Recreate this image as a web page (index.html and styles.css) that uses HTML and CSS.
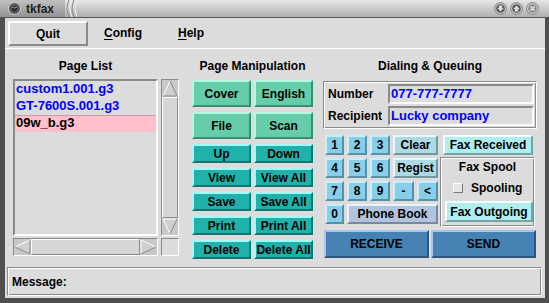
FILE: index.html
```html
<!DOCTYPE html>
<html>
    <head>
        <title>tkfax</title>
        <meta name="viewport" content="width=device-width, initial-scale=1">
        <link rel="stylesheet" href="styles.css">
    </head>
    <body>
<div class="window">
    <div class="titlebar">
        <div class="title-left">
            <svg class="title-icon" width="13" height="13" viewBox="0 0 13 13">
                <circle cx="6.5" cy="6.5" r="6" fill="#5a5a5a" stroke="#d0d0d0" stroke-width="1"/>
                <path d="M3.2 5 Q6.5 3.2 9.8 5 Q9.4 9.5 6.5 9.8 Q3.6 9.5 3.2 5 Z" fill="#2e2e2e"/>
                <path d="M3.6 5.2 Q6.5 6.6 9.4 5.2" stroke="#9a9a9a" fill="none"/>
            </svg>
            <span class="title">tkfax</span>
        </div>
        <svg class="grooves" width="12" height="17" viewBox="0 0 12 17">
            <path d="M4 0 Q0 8.5 4 17" stroke="#8a8a8a" fill="none"/>
            <path d="M7 0 Q3 8.5 7 17" stroke="#f4f4f4" fill="none"/>
            <path d="M9 0 Q5 8.5 9 17" stroke="#8a8a8a" fill="none"/>
            <path d="M12 0 Q8 8.5 12 17" stroke="#f4f4f4" fill="none"/>
        </svg>
        <div class="title-fill"></div>
        <div class="title-buttons">
            <svg width="13" height="13" viewBox="0 0 13 13">
                <circle cx="6.5" cy="6.5" r="6" fill="#bdbdbd" stroke="#8a8a8a"/>
                <circle cx="6.5" cy="6.5" r="4.3" fill="#5c5c5c"/>
                <path d="M4.8 3.5 H8.2 V6 H9.6 L6.5 9.6 L3.4 6 H4.8 Z" fill="#dcdcdc"/>
            </svg>
            <svg width="13" height="13" viewBox="0 0 13 13">
                <circle cx="6.5" cy="6.5" r="6" fill="#bdbdbd" stroke="#8a8a8a"/>
                <circle cx="6.5" cy="6.5" r="4.3" fill="#5c5c5c"/>
                <path d="M4.8 9.5 H8.2 V7 H9.6 L6.5 3.4 L3.4 7 H4.8 Z" fill="#dcdcdc"/>
            </svg>
            <svg width="13" height="13" viewBox="0 0 13 13">
                <circle cx="6.5" cy="6.5" r="6" fill="#c4c4c4" stroke="#8a8a8a"/>
                <circle cx="6.5" cy="6.5" r="4.3" fill="#8c8c8c"/>
                <path d="M4.4 4.4 L8.6 8.6 M8.6 4.4 L4.4 8.6" stroke="#d8d8d8" stroke-width="1.6"/>
            </svg>
        </div>
    </div>

    <div class="frame">
        <div class="menubar">
            <div class="menu-quit">Quit</div>
            <div class="menu-item config"><u>C</u>onfig</div>
            <div class="menu-item help"><u>H</u>elp</div>
        </div>

        <div class="main">
            <section class="pages">
                <div class="label list-label">Page List</div>
                <div class="list-grid">
                    <div class="listbox">
                        <div class="item">custom1.001.g3</div>
                        <div class="item">GT-7600S.001.g3</div>
                        <div class="item selected">09w_b.g3</div>
                    </div>
                    <div class="vscroll">
                        <svg width="16" height="17" viewBox="0 0 16 17">
                            <polygon points="8,1 15,16 1,16" fill="#cfcfcf"/>
                            <polyline points="1,16 8,1" stroke="#fff" fill="none"/>
                            <polyline points="8,1 15,16 1,16" stroke="#8a8a8a" fill="none"/>
                        </svg>
                        <div class="slider"></div>
                        <svg width="16" height="17" viewBox="0 0 16 17">
                            <polygon points="1,1 15,1 8,16" fill="#cfcfcf"/>
                            <polyline points="8,16 1,1 15,1" stroke="#fff" fill="none"/>
                            <polyline points="15,1 8,16" stroke="#8a8a8a" fill="none"/>
                        </svg>
                    </div>
                    <div class="hscroll">
                        <svg width="17" height="16" viewBox="0 0 17 16">
                            <polygon points="1,8 16,1 16,15" fill="#cfcfcf"/>
                            <polyline points="16,1 1,8" stroke="#fff" fill="none"/>
                            <polyline points="1,8 16,15 16,1" stroke="#8a8a8a" fill="none"/>
                        </svg>
                        <div class="slider"></div>
                        <svg width="17" height="16" viewBox="0 0 17 16">
                            <polygon points="1,1 16,8 1,15" fill="#cfcfcf"/>
                            <polyline points="1,15 1,1 16,8" stroke="#fff" fill="none"/>
                            <polyline points="16,8 1,15" stroke="#8a8a8a" fill="none"/>
                        </svg>
                    </div>
                    <div class="corner"></div>
                </div>
            </section>

            <section class="manip">
                <div class="label">Page Manipulation</div>
                <div class="manip-grid">
                    <div class="btn green tall">Cover</div>
                    <div class="btn green tall">English</div>
                    <div class="btn green tall">File</div>
                    <div class="btn green tall">Scan</div>
                    <div class="btn teal">Up</div>
                    <div class="btn teal">Down</div>
                    <div class="btn teal">View</div>
                    <div class="btn teal">View All</div>
                    <div class="btn teal">Save</div>
                    <div class="btn teal">Save All</div>
                    <div class="btn teal">Print</div>
                    <div class="btn teal">Print All</div>
                    <div class="btn teal">Delete</div>
                    <div class="btn teal">Delete All</div>
                </div>
            </section>

            <section class="dial">
                <div class="label">Dialing &amp; Queuing</div>
                <div class="entries groove">
                    <div class="entry-row">
                        <span class="entry-label">Number</span>
                        <div class="entry">077-777-7777</div>
                    </div>
                    <div class="entry-row">
                        <span class="entry-label">Recipient</span>
                        <div class="entry">Lucky company</div>
                    </div>
                </div>

                <div class="keypad-area">
                    <div class="keypad">
                        <div class="btn sky">1</div>
                        <div class="btn sky">2</div>
                        <div class="btn sky">3</div>
                        <div class="btn pale wide">Clear</div>
                        <div class="btn sky">4</div>
                        <div class="btn sky">5</div>
                        <div class="btn sky">6</div>
                        <div class="btn pale wide">Regist</div>
                        <div class="btn sky">7</div>
                        <div class="btn sky">8</div>
                        <div class="btn sky">9</div>
                        <div class="btn sky">-</div>
                        <div class="btn sky">&lt;</div>
                        <div class="btn sky">0</div>
                        <div class="btn steel-light book">Phone Book</div>
                    </div>
                    <div class="spool-col">
                        <div class="btn turq fax-received">Fax Received</div>
                        <div class="spool groove">
                            <div class="spool-title">Fax Spool</div>
                            <div class="spool-row">
                                <span class="checkbox"></span>
                                <span>Spooling</span>
                            </div>
                            <div class="btn turq fax-outgoing">Fax Outgoing</div>
                        </div>
                    </div>
                </div>

                <div class="send-row">
                    <div class="btn steel big">RECEIVE</div>
                    <div class="btn steel big">SEND</div>
                </div>
            </section>
        </div>

        <div class="message groove">Message:</div>
    </div>
</div>
    </body>
</html>
```

FILE: styles.css
```css
html, body {
    margin: 0;
    padding: 0;
}

body {
    font-family: "Liberation Sans", Arial, sans-serif;
    font-size: 12px;
    font-weight: bold;
    color: #000;
}

.window {
    width: 549px;
    height: 303px;
    background: #4f4f4f;
    display: flex;
    flex-direction: column;
}

/* window manager title bar */
.titlebar {
    height: 17px;
    border-bottom: 1px solid #555;
    display: flex;
    align-items: stretch;
    background: linear-gradient(#e6e6e6, #b0b0b0);
}

.title-left {
    width: 65px;
    display: flex;
    align-items: center;
    padding-left: 8px;
    box-sizing: border-box;
    background: linear-gradient(#c0c0c0, #939393);
}

.title-icon {
    display: block;
}

.title {
    margin-left: 5px;
    color: #1e1e1e;
}

.grooves {
    display: block;
}

.title-fill {
    flex: 1;
}

.title-buttons {
    display: flex;
    align-items: center;
    gap: 3px;
    padding-right: 10px;
}

.title-buttons svg {
    display: block;
}

/* application frame */
.frame {
    flex: 1;
    margin: 0 4px 5px 5px;
    background: #dcdcdc;
    display: flex;
    flex-direction: column;
}

.menubar {
    height: 31px;
    box-sizing: border-box;
    padding: 3px 0 0 3px;
    border-bottom: 1px solid #fff;
    display: flex;
    align-items: flex-start;
}

.menu-quit {
    width: 80px;
    height: 25px;
    box-sizing: border-box;
    border: 2px solid;
    border-color: #fff #8a8a8a #8a8a8a #fff;
    display: flex;
    align-items: center;
    justify-content: center;
}

.menu-item {
    height: 25px;
    line-height: 25px;
}

.menu-item u {
    text-underline-offset: 2px;
}

.config {
    margin-left: 16px;
}

.help {
    margin-left: 36px;
}

.main {
    flex: 1;
    display: flex;
    align-items: flex-start;
    padding: 10px 0 0 8px;
}

.label {
    height: 14px;
    line-height: 14px;
    text-align: center;
}

/* page list */
.pages {
    width: 166px;
}

.list-label {
    width: 145px;
    margin-bottom: 6px;
}

.list-grid {
    display: grid;
    grid-template-columns: 145px 18px;
    grid-template-rows: 157px 18px;
    column-gap: 3px;
    row-gap: 2px;
}

.listbox {
    box-sizing: border-box;
    border: 2px solid;
    border-color: #8a8a8a #fff #fff #8a8a8a;
    font-size: 13px;
    color: #0000ff;
}

.item {
    height: 17px;
    line-height: 16px;
    padding-left: 1px;
}

.item.selected {
    background: #ffc0cb;
    color: #000;
    box-shadow: inset 0 1px 0 #c89aa2;
}

.vscroll,
.hscroll {
    box-sizing: border-box;
    border: 1px solid;
    border-color: #8a8a8a #fff #fff #8a8a8a;
    background: #c8c8c8;
    display: flex;
}

.vscroll {
    flex-direction: column;
}

.vscroll svg,
.hscroll svg {
    display: block;
    flex: none;
}

.slider {
    flex: 1;
    box-sizing: border-box;
    border: 1px solid;
    border-color: #fff #8a8a8a #8a8a8a #fff;
    background: #d6d6d6;
}

.corner {
    box-sizing: border-box;
    border: 1px solid;
    border-color: #8a8a8a #fff #fff #8a8a8a;
}

/* buttons */
.btn {
    box-sizing: border-box;
    border: 2px solid;
    display: flex;
    align-items: center;
    justify-content: center;
    white-space: nowrap;
}

.green {
    background: #66cdaa;
    border-color: #b4f7e2 #3f8b72 #3f8b72 #b4f7e2;
}

.teal {
    background: #20b2aa;
    border-color: #a2fbf6 #157670 #157670 #a2fbf6;
}

.sky {
    background: #87ceeb;
    border-color: #c6f0ff #5a8fa4 #5a8fa4 #c6f0ff;
}

.pale {
    background: #add8e6;
    border-color: #e4f8ff #76979f #76979f #e4f8ff;
}

.steel-light {
    background: #b0c4de;
    border-color: #e8f2ff #7a889b #7a889b #e8f2ff;
}

.turq {
    background: #afeeee;
    border-color: #f2ffff #77a5a5 #77a5a5 #f2ffff;
}

.steel {
    background: #4682b4;
    border-color: #a3c6f2 #2d587c #2d587c #a3c6f2;
}

/* page manipulation */
.manip {
    width: 121px;
    margin-left: 13px;
}

.manip-grid {
    margin-top: 7px;
    display: grid;
    grid-template-columns: 59px 59px;
    grid-auto-rows: 19px;
    column-gap: 3px;
    row-gap: 5px;
}

.manip-grid .tall {
    height: 27px;
}

.manip-grid {
    grid-template-rows: 27px 27px;
}

/* dialing */
.dial {
    width: 214px;
    margin-left: 10px;
}

.groove {
    box-sizing: border-box;
    border: 1px solid;
    border-color: #8a8a8a #fff #fff #8a8a8a;
    box-shadow: inset 1px 1px 0 #fff, inset -1px -1px 0 #8a8a8a;
}

.entries {
    margin-top: 8px;
    padding: 2px 2px 2px 4px;
    display: flex;
    flex-direction: column;
    gap: 2px;
}

.entry-row {
    display: flex;
    align-items: center;
}

.entry-label {
    width: 60px;
}

.entry {
    width: 146px;
    height: 20px;
    box-sizing: border-box;
    border: 2px solid;
    border-color: #8a8a8a #fff #fff #8a8a8a;
    padding-left: 1px;
    line-height: 16px;
    font-size: 13px;
    color: #0000ff;
    white-space: nowrap;
}

.keypad-area {
    margin-top: 6px;
    display: flex;
    align-items: flex-start;
}

.keypad {
    margin-left: 2px;
    display: grid;
    grid-template-columns: 19px 20px 20px 21px 21px;
    grid-template-rows: repeat(4, 20px);
    column-gap: 3px;
    row-gap: 3px;
}

.keypad .wide {
    grid-column: span 2;
}

.keypad .book {
    grid-column: span 4;
}

.spool-col {
    width: 95px;
    margin-left: 2px;
}

.fax-received {
    height: 20px;
    margin: 0 2px 0 3px;
}

.spool {
    margin-top: 2px;
    height: 70px;
    padding: 2px 0 0 0;
}

.spool-title {
    height: 14px;
    line-height: 14px;
    text-align: center;
}

.spool-row {
    margin-top: 7px;
    height: 14px;
    display: flex;
    align-items: center;
    padding-left: 12px;
}

.checkbox {
    width: 10px;
    height: 10px;
    box-sizing: border-box;
    border: 1px solid;
    border-color: #fff #777 #777 #fff;
    background: #e6e6e6;
    margin-right: 8px;
}

.fax-outgoing {
    width: 88px;
    height: 21px;
    margin: 6px 0 0 4px;
}

.send-row {
    margin: 3px 0 0 1px;
    display: flex;
    gap: 2px;
}

.big {
    width: 105px;
    height: 28px;
}

/* status line */
.message {
    height: 29px;
    margin: 0 3px 2px 2px;
    padding-left: 4px;
    display: flex;
    align-items: center;
}
```
